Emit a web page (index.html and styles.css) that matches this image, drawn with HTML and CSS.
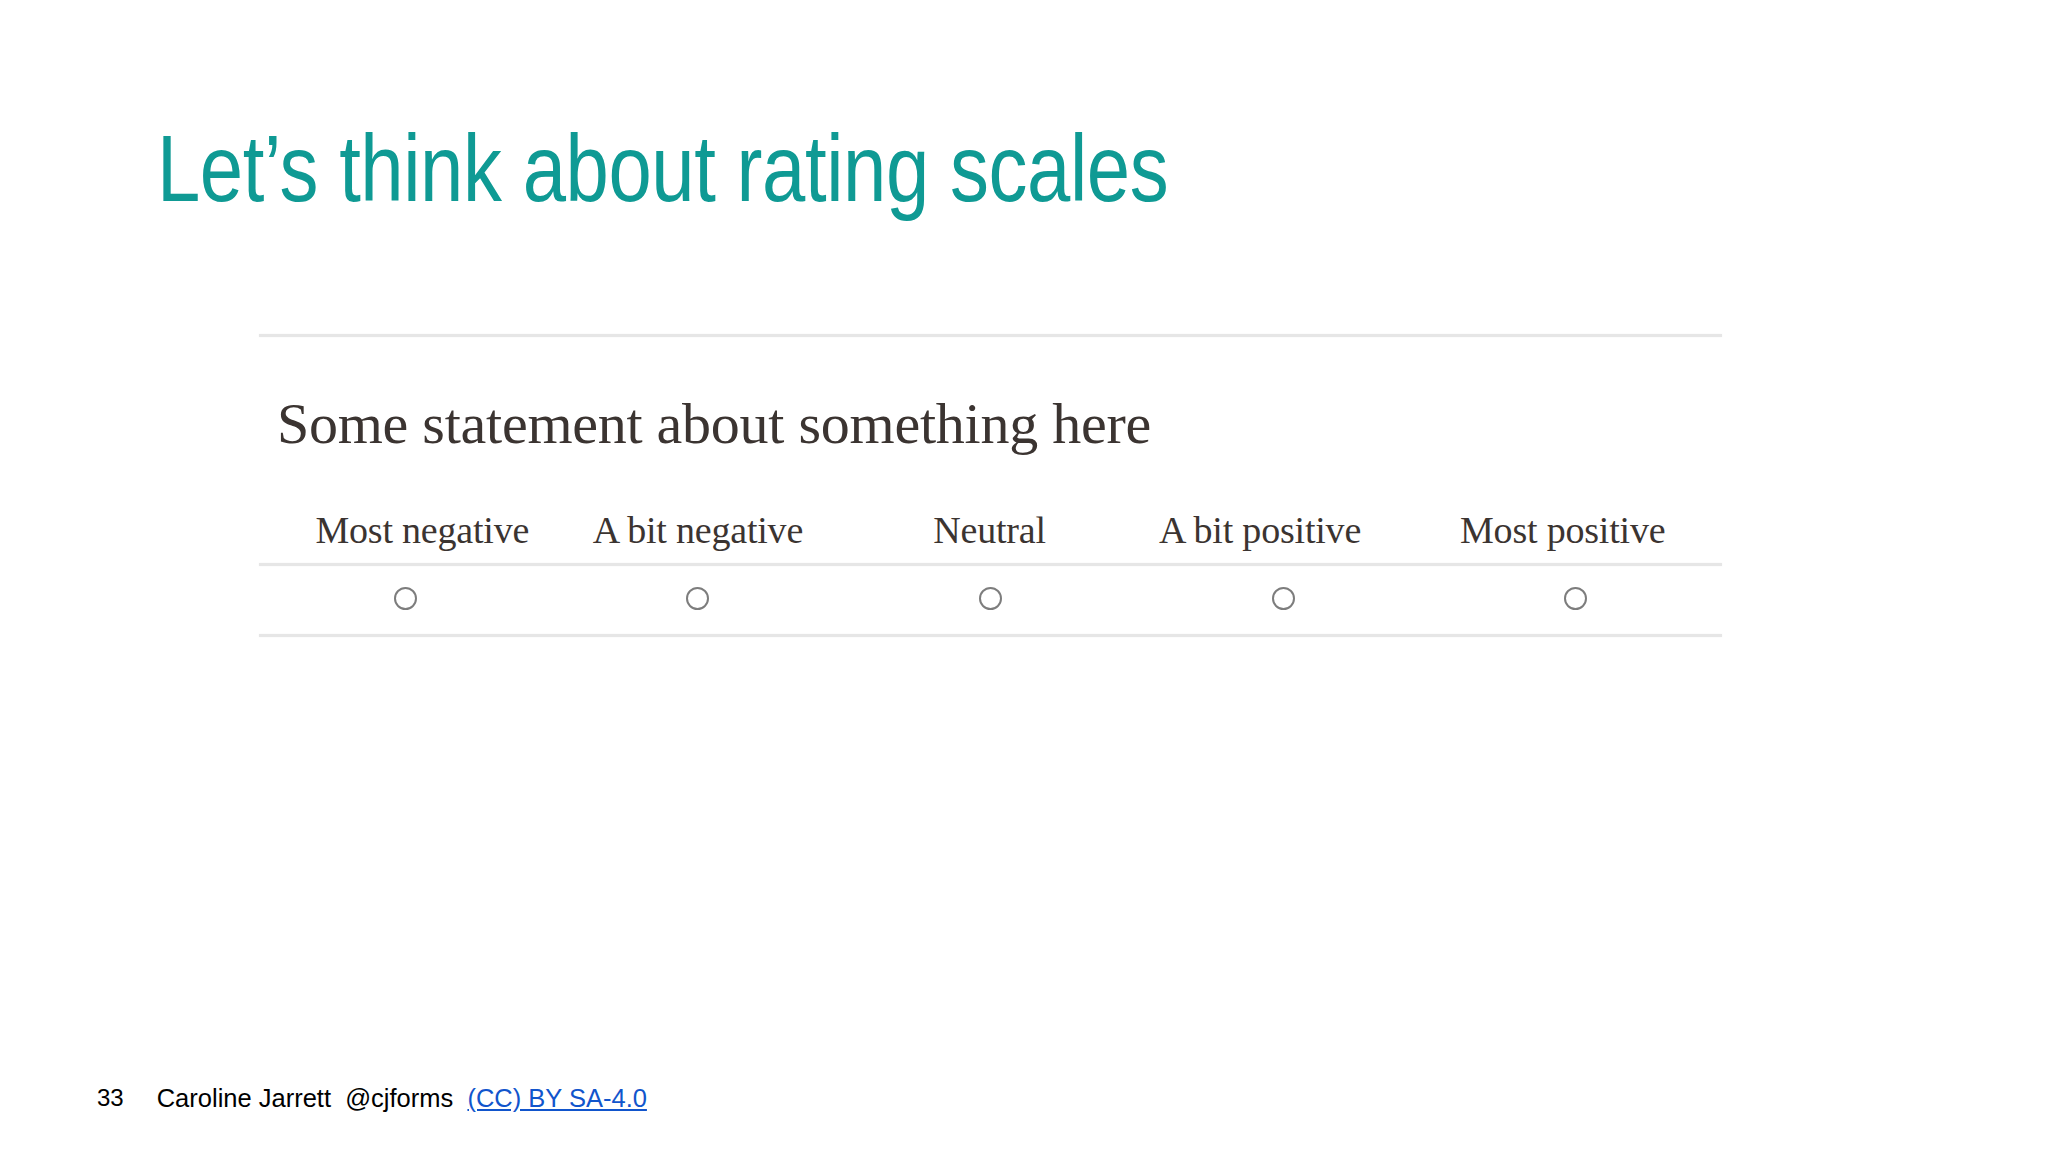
FILE: index.html
```html
<!DOCTYPE html>
<html lang="en">
<head>
<meta charset="utf-8">
<title>Let’s think about rating scales</title>
<link rel="stylesheet" href="styles.css">
</head>
<body>
<div class="slide">
  <h1 class="title">Let’s think about rating scales</h1>
  <div class="form">
    <div class="rule"></div>
    <div class="statement">Some statement about something here</div>
    <div class="row labels">
      <div class="cell l1">Most negative</div>
      <div class="cell l2">A bit negative</div>
      <div class="cell l3">Neutral</div>
      <div class="cell l4">A bit positive</div>
      <div class="cell l5">Most positive</div>
    </div>
    <div class="rule"></div>
    <div class="row radios">
      <div class="cell"><span class="radio"></span></div>
      <div class="cell"><span class="radio"></span></div>
      <div class="cell"><span class="radio"></span></div>
      <div class="cell"><span class="radio"></span></div>
      <div class="cell"><span class="radio"></span></div>
    </div>
    <div class="rule"></div>
  </div>
  <div class="footer">
    <span class="num">33</span>
    <span class="author">Caroline Jarrett&nbsp; @cjforms&nbsp; <a href="#" class="lic">(CC) BY SA-4.0</a></span>
  </div>
</div>
</body>
</html>
```
FILE: styles.css
```css
html, body {
  margin: 0;
  padding: 0;
  background: #ffffff;
}
.slide {
  width: 2048px;
  height: 1152px;
  position: relative;
  display: flex;
  flex-direction: column;
  font-family: "Liberation Sans", Arial, sans-serif;
}
.title {
  margin: 122px 0 0 157px;
  font-family: "Liberation Sans Narrow", "Arial Narrow", "Liberation Sans", sans-serif;
  font-weight: normal;
  font-size: 94px;
  line-height: 94px;
  color: #0f9a94;
  letter-spacing: -0.5px;
  white-space: nowrap;
  transform: scaleX(0.828);
  transform-origin: left center;
}
.form {
  margin: 118px 0 0 259px;
  width: 1463px;
  display: flex;
  flex-direction: column;
  font-family: "Liberation Serif", "Times New Roman", serif;
  color: #3b3431;
}
.rule {
  height: 3px;
  background: #e6e6e6;
  box-shadow: 0 0 2px rgba(0,0,0,0.06);
}
.statement {
  margin-top: 55px;
  padding-left: 18px;
  font-size: 58px;
  line-height: 64px;
  letter-spacing: -0.25px;
}
.row {
  display: grid;
  grid-template-columns: repeat(5, 1fr);
}
.labels {
  margin-top: 52px;
  margin-bottom: 11px;
  font-size: 38px;
  line-height: 44px;
  letter-spacing: -0.2px;
}
.labels .cell {
  text-align: center;
  white-space: nowrap;
}
.labels .l1 { padding-left: 34px; }
.labels .l2 { padding-left: 0; }
.labels .l3 { padding-right: 2px; }
.labels .l4 { padding-right: 46px; }
.labels .l5 { padding-right: 26px; }
.radios {
  height: 68px;
  align-items: center;
}
.radios .cell {
  display: flex;
  justify-content: center;
}
.radio {
  width: 19px;
  height: 19px;
  border: 2px solid #7d7d7d;
  border-radius: 50%;
  display: block;
  margin-top: -4px;
}
.footer {
  position: absolute;
  left: 97px;
  top: 1083px;
  display: flex;
  gap: 33px;
  font-size: 25.5px;
  line-height: 30px;
  color: #000;
}
.num { font-size: 24px; }
.lic {
  color: #1155cc;
  text-decoration: underline;
}
```
